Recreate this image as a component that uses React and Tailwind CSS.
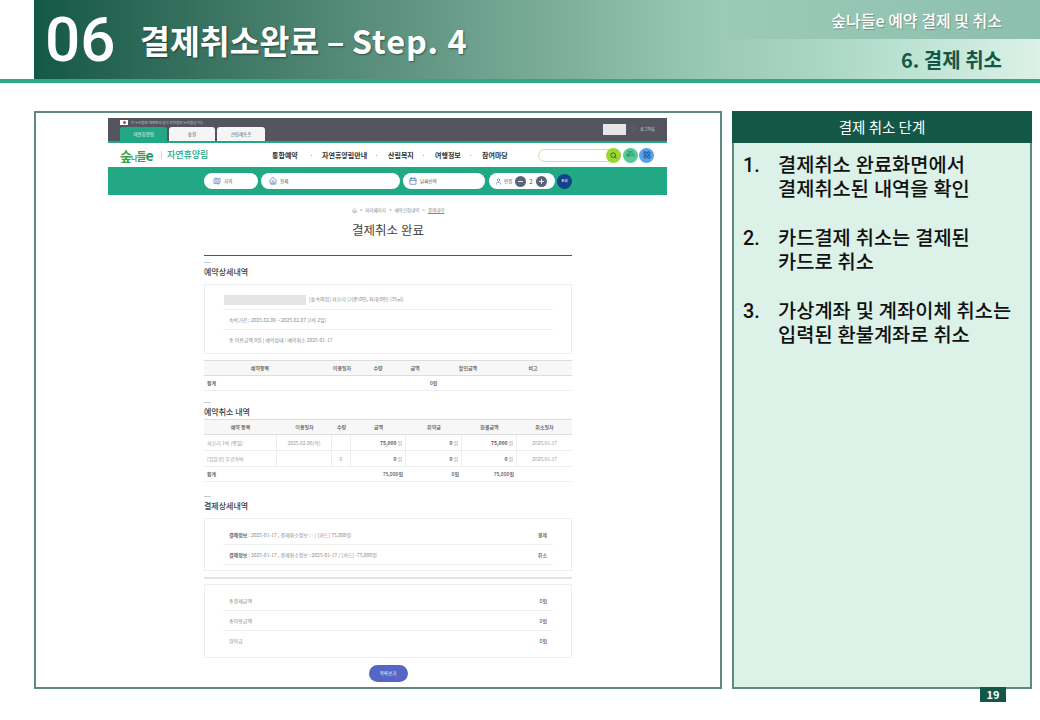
import React from "react";
import { Search, Plus, Minus, Home, User, Calendar, LayoutGrid, Map } from "lucide-react";

const kr = "font-['Noto_Sans_CJK_KR','Noto_Sans',sans-serif]";

const SectionTitle = ({ children, className = "" }) => (
  <div className={className}>
    <div className="w-[7px] h-px bg-[#c5cad6]" />
    <div className="mt-[4px] text-[8px] leading-[10px] font-medium text-[#3a3f4a]">{children}</div>
  </div>
);

const DetailRow = ({ children, right, last }) => (
  <div className={`h-5 flex items-center justify-between pl-[6px] pr-[6px] text-[5px] text-[#8a8a8a] ${last ? "" : "border-b border-[#f0f0f0]"}`}>
    <span>{children}</span>
    {right && <span className="text-[#666] font-medium">{right}</span>}
  </div>
);

const cancelRows = [
  ["뫼꼬리 1박 (평일)", "2025.02.06(목)", "", "75,000", "0", "75,000", "2025.01.17"],
  ["[입갑료] 무료숙박", "", "6", "0", "0", "0", "2025.01.17"],
];

const colWidths = "grid-cols-[73px_55px_19px_55px_56px_55px_55px]";

const Screenshot = () => (
  <div className="w-[559px] ml-[72px] mt-[5px] text-[#777]">
    {/* top gray bar */}
    <div className="h-[25px] bg-[#555560] border-b-[2px] border-[#22a884] flex justify-between pl-3 pr-[12px]">
      <div>
        <div className="h-[9px] flex items-center gap-[3px] text-[3.5px] text-[#c9c9d0]">
          <span className="w-2 h-[5px] bg-white flex items-center justify-center">
            <span className="w-[3px] h-[3px] rounded-full bg-[#b0405a]" />
          </span>
          <span>이 누리집은 대한민국 공식 전자정부 누리집입니다.</span>
        </div>
        <div className="flex gap-[2px] text-[4.5px] h-[14px]">
          <div className="w-[47px] rounded-t-[3px] bg-[#22a884] text-white flex items-center justify-center">자연휴양림</div>
          <div className="w-[46px] rounded-t-[3px] bg-[#f5f5f5] text-[#555] flex items-center justify-center">숲길</div>
          <div className="w-[48px] rounded-t-[3px] bg-[#f5f5f5] text-[#555] flex items-center justify-center">산림레포츠</div>
        </div>
      </div>
      <div className="flex items-center gap-[3px] h-[22px] text-[4px] text-[#ddd]">
        <span className="w-[23px] h-[11px] bg-[#e6e6e6]" />
        <span className="ml-[2px] text-[6px] leading-none text-[#888]">▷</span>
        <span>로그아웃</span>
      </div>
    </div>
    {/* nav */}
    <div className="h-[24px] flex items-center pl-3 pr-[12px]">
      <div className="w-[35px] flex items-end text-[#3f9e3f] font-bold leading-none tracking-[-1px]">
        <span className="text-[13px]">숲</span>
        <span className="text-[7px]">나</span>
        <span className="text-[11px]">들</span>
        <span className="text-[14px] text-[#1f9a55]">e</span>
      </div>
      <div className="w-px h-[9px] bg-[#ddd] ml-[6px]" />
      <div className="ml-[5px] w-[62px] text-[9px] text-[#22a884] font-medium">자연휴양림</div>
      <div className="flex items-center text-[7px] font-bold text-[#333] ml-[43px]">
        <span className="w-[50px] pr-[10px] flex items-center justify-between">통합예약<i className="w-px h-px bg-[#aaa]" /></span>
        <span className="w-[66px] pr-[11px] flex items-center justify-between">자연휴양림안내<i className="w-px h-px bg-[#aaa]" /></span>
        <span className="w-[47px] pr-[11px] flex items-center justify-between">산림복지<i className="w-px h-px bg-[#aaa]" /></span>
        <span className="w-[47px] pr-[11px] flex items-center justify-between">여행정보<i className="w-px h-px bg-[#aaa]" /></span>
        <span className="w-[56px]">참여마당</span>
      </div>
      <div className="w-[83px] h-[13px] rounded-full border border-[#cfe3a0] bg-white flex justify-end items-center">
        <span className="w-[15px] h-[15px] shrink-0 -mr-px rounded-full bg-[#9ad82f] flex items-center justify-center">
          <Search size={7} strokeWidth={3} className="text-[#2f5d2f]" />
        </span>
      </div>
      <span className="ml-[2px] w-[15px] h-[15px] rounded-full bg-[#55cc95] text-[3px] leading-[3.5px] text-[#14532d] flex items-center justify-center text-center">마이<br />페이지</span>
      <span className="ml-px w-[15px] h-[15px] rounded-full bg-[#5aa2e6] flex items-center justify-center">
        <LayoutGrid size={8} strokeWidth={2.5} className="text-[#1e4f9a]" />
      </span>
    </div>
    {/* search bar */}
    <div className="h-[28px] bg-[#22a884] flex items-center pl-[96px] gap-[3px] text-[4.5px] text-[#555]">
      <div className="w-[54px] h-4 rounded-full bg-white flex items-center gap-[3px] pl-[9px]">
        <Map size={8} className="text-[#3b6db0]" /><span>지역</span>
      </div>
      <div className="w-[139px] h-4 rounded-full bg-white flex items-center gap-[3px] pl-[8px]">
        <Home size={8} className="text-[#3b6db0]" /><span>전체</span>
      </div>
      <div className="w-[82px] h-4 rounded-full bg-white flex items-center gap-[3px] pl-[6px]">
        <Calendar size={8} className="text-[#3b6db0]" /><span>날짜선택</span>
      </div>
      <div className="w-[66px] h-4 ml-px rounded-full bg-white flex items-center pl-[6px]">
        <User size={7} className="text-[#3b6db0]" /><span className="ml-[2px]">인원</span>
        <span className="ml-[3px] w-[11px] h-[11px] rounded-full bg-[#5a6478] flex items-center justify-center"><Minus size={7} strokeWidth={3} className="text-white" /></span>
        <span className="mx-[3px] text-[6px]">2</span>
        <span className="w-[11px] h-[11px] rounded-full bg-[#5a6478] flex items-center justify-center"><Plus size={7} strokeWidth={3} className="text-white" /></span>
      </div>
      <div className="w-[15px] h-[15px] -ml-px rounded-full bg-[#14438c] text-white text-[3.5px] flex items-center justify-center">조회</div>
    </div>

    {/* page body */}
    <div className="w-[368px] ml-[96px]">
      <div className="mt-[11px] h-[8px] flex items-center justify-center gap-[3px] text-[4.5px] text-[#888] pl-[20px]">
        <Home size={5} /><span>&gt;</span><span>마이페이지</span><span>&gt;</span><span>예약신청내역</span><span>&gt;</span><span className="underline">결제내역</span>
      </div>
      <div className="mt-[7px] h-[18px] text-center text-[12.5px] leading-[18px] text-[#444]">결제취소 완료</div>
      <div className="mt-[16px] h-px bg-[#555]" />

      <SectionTitle className="mt-[6px]">예약상세내역</SectionTitle>
      <div className="mt-[7px] h-[70px] border border-[#eeeeee] px-[18px] pt-[5px]">
        <DetailRow>
          <span className="inline-block align-middle w-[82px] h-[10px] bg-[#e4e4e4] mr-[2px] -ml-[5px]" /> [숲속의집] 뫼꼬리 (기준:0인, 최대:0인) (35㎡)
        </DetailRow>
        <DetailRow>숙박기간 : 2025.02.06 ~ 2025.02.07 (1박 2일)</DetailRow>
        <DetailRow last>총 이용금액 0원 | 예약상태 : 예약취소 2025-01-17</DetailRow>
      </div>
      <div className="mt-[6px] h-[16px] bg-[#f7f7f7] border-t border-[#dddddd] border-b grid grid-cols-[112px_52px_20px_54px_52px_78px] items-center text-center text-[5px] text-[#555] font-medium">
        <span>예약항목</span><span>이용일자</span><span>수량</span><span>금액</span><span>할인금액</span><span>비고</span>
      </div>
      <div className="h-[15px] border-b border-[#eeeeee] flex items-center text-[5px] font-medium text-[#555] pl-[3px]">
        <span className="w-[223px]">합계</span><span>0원</span>
      </div>

      <SectionTitle className="mt-[11px]">예약취소 내역</SectionTitle>
      <div className={`mt-[2px] h-[16px] bg-[#f7f7f7] border-t border-b border-[#dddddd] grid ${colWidths} items-center text-center text-[5px] text-[#555] font-medium`}>
        <span>예약 항목</span><span>이용일자</span><span>수량</span><span>금액</span><span>위약금</span><span>환불금액</span><span>취소일자</span>
      </div>
      {cancelRows.map((r) => (
        <div key={r[0]} className={`h-[16px] border-b border-[#eeeeee] grid ${colWidths} text-[5px] text-[#999]`}>
          <span className="flex items-center pl-[3px] border-r border-[#eeeeee]">{r[0]}</span>
          <span className="flex items-center justify-center border-r border-[#eeeeee]">{r[1]}</span>
          <span className="flex items-center justify-center border-r border-[#eeeeee]">{r[2]}</span>
          {[r[3], r[4], r[5]].map((v, i) => (
            <span key={i} className="flex items-center justify-end pr-[3px] gap-[1px] border-r border-[#eeeeee]">
              <b className="text-[5px] text-[#555] font-bold">{v}</b> 원
            </span>
          ))}
          <span className="flex items-center justify-center">{r[6]}</span>
        </div>
      ))}
      <div className={`h-[15px] border-b border-[#eeeeee] grid ${colWidths} items-center text-[5px] text-[#555] font-medium`}>
        <span className="pl-[3px]">합계</span><span /><span />
        <span className="text-right pr-[3px]">75,000원</span>
        <span className="text-right pr-[3px]">0원</span>
        <span className="text-right pr-[3px]">75,000원</span>
        <span />
      </div>

      <SectionTitle className="mt-[14px]">결제상세내역</SectionTitle>
      <div className="mt-[7px] h-[53px] border border-[#eeeeee] px-[18px] pt-[6px]">
        <DetailRow right="결제"><b className="font-bold text-[#666]">결제정보</b> : 2025-01-17 , 결제취소정보 : - / [카드] 75,000원</DetailRow>
        <DetailRow right="취소"><b className="font-bold text-[#666]">결제정보</b> : 2025-01-17 , 결제취소정보 : 2025-01-17 / [카드] -75,000원</DetailRow>
      </div>
      <div className="mt-[6px] h-[2px] bg-[#e4e4e4]" />
      <div className="mt-[5px] h-[74px] border border-[#eeeeee] px-[18px] pt-[6px]">
        <DetailRow right="0원">총결제금액</DetailRow>
        <DetailRow right="0원">총이용금액</DetailRow>
        <DetailRow right="0원" last>위약금</DetailRow>
      </div>
      <div className="mt-[7px] mx-auto w-[39px] h-[17px] rounded-full bg-[#5566c4] text-white text-[4.5px] flex items-center justify-center">목록보기</div>
    </div>
  </div>
);

const steps = [
  ["1.", "결제취소 완료화면에서", "결제취소된 내역을 확인"],
  ["2.", "카드결제 취소는 결제된", "카드로 취소"],
  ["3.", "가상계좌 및 계좌이체 취소는", "입력된 환불계좌로 취소"],
];

export default function App() {
  return (
    <div className={`w-[1040px] h-[720px] bg-white overflow-hidden ${kr}`}>
      {/* header */}
      <div className="h-[83px] border-b-[4px] border-[#2faa88]">
        <div className="ml-[34px] h-[79px] bg-gradient-to-r from-[#135846] via-[#9ccab8] via-68% to-[#8dbfae] flex items-center relative">
          <div className="w-[106px] pl-[11px] text-[62px] leading-[74px] font-medium text-white font-['Roboto',sans-serif]">06</div>
          <div className="text-[32.5px] leading-[79px] font-bold text-white [text-shadow:1px_1px_2px_rgba(0,0,0,0.45)]">
            결제취소완료 – <span className="tracking-[1px]">Step. 4</span>
          </div>
          <div className="absolute right-0 top-0 w-[320px]">
            <div className="h-[39px] pr-[38px] text-right text-[16px] leading-[40px] font-medium whitespace-nowrap text-white [text-shadow:1px_1px_1px_rgba(0,0,0,0.25)]">숲나들e 예약 결제 및 취소</div>
            <div className="h-[40px] pr-[38px] text-right text-[20px] leading-[41px] font-bold text-[#135846] bg-gradient-to-r from-[#a0cdbb]/0 via-[#b5dfcf] via-50% to-[#dcf1e8]">6. 결제 취소</div>
          </div>
        </div>
      </div>

      {/* content */}
      <div className="mt-[28px] ml-[34px] flex gap-[10px] items-start">
        <div className="w-[688px] h-[578px] border-2 border-[#5f897e] overflow-hidden">
          <Screenshot />
        </div>
        <div className="w-[300px] h-[578px] border-2 border-[#5f897e] bg-[#dcf1e8]">
          <div className="h-[32px] -mt-[2px] -mx-[2px] bg-[#135846] text-white text-center text-[14.5px] leading-[32px]">결제 취소 단계</div>
          <div className="pl-[9px] pt-[11px] text-[#111] font-medium font-['Roboto','Noto_Sans_CJK_KR',sans-serif]">
            {steps.map(([n, a, b]) => (
              <div key={n} className="flex text-[19.8px] leading-[24px] mb-[25px] whitespace-nowrap">
                <span className="w-[35px]">{n}</span>
                <div>{a}<br />{b}</div>
              </div>
            ))}
          </div>
        </div>
      </div>

      {/* page number */}
      <div className="ml-[980px] -mt-[2px] relative w-[26px] h-[15px] bg-[#135846] text-white text-[11px] leading-[15px] font-bold text-center">19</div>
    </div>
  );
}
